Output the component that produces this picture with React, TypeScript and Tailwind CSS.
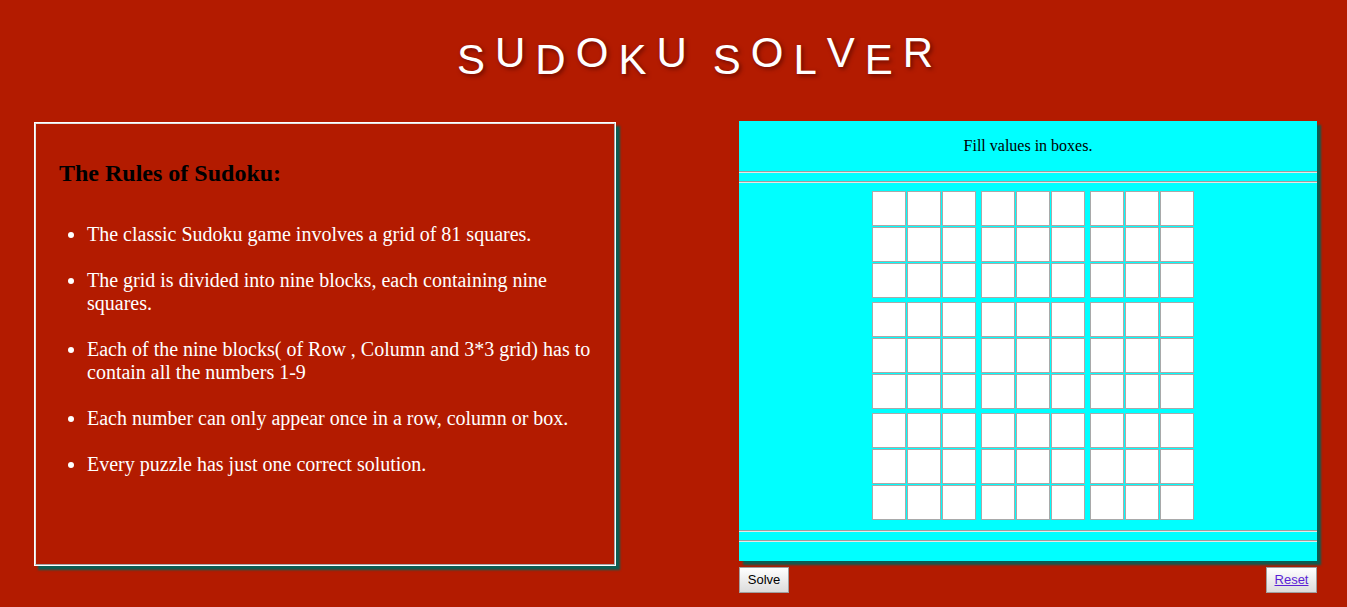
const title: [string, boolean][] = [
  ['S', false], ['U', true], ['D', false], ['O', true], ['K', false], ['U', true],
  [' ', false],
  ['S', false], ['O', true], ['L', false], ['V', true], ['E', false], ['R', true],
];

const rules = [
  'The classic Sudoku game involves a grid of 81 squares.',
  'The grid is divided into nine blocks, each containing nine squares.',
  'Each of the nine blocks( of Row , Column and 3*3 grid) has to contain all the numbers 1-9',
  'Each number can only appear once in a row, column or box.',
  'Every puzzle has just one correct solution.',
];

function Rule() {
  return <div className="h-[2px] border-t border-t-[#9c9c9c] border-b border-b-[#e6e6e6]" />;
}

function Block() {
  return (
    <div className="grid grid-cols-3 gap-[1px]">
      {Array.from({ length: 9 }).map((_, i) => (
        <input
          key={i}
          type="text"
          maxLength={1}
          className="w-[34px] h-[35px] bg-white border border-[#a9a9a9] text-center outline-none"
        />
      ))}
    </div>
  );
}

export default function App() {
  return (
    <div className="min-h-screen bg-[#b31b00] font-['Liberation_Serif',serif]">
      <div className="h-[121px] pl-[457px] pt-[32px]">
        <h1 className="flex items-end font-['Liberation_Sans',Arial,sans-serif] text-[42px] leading-none text-white tracking-[10px] [text-shadow:2px_2px_4px_rgba(60,0,0,0.6)]">
          {title.map(([ch, up], i) =>
            ch === ' ' ? (
              <span key={i} className="w-[16px]" />
            ) : (
              <span key={i} className={up ? 'mb-[7px]' : 'mb-0'}>{ch}</span>
            )
          )}
        </h1>
      </div>

      <div className="flex items-start">
        <div className="ml-[34px] mt-[1px] w-[582px] h-[444px] border border-white shadow-[4px_4px_2px_#0b5d52]">
          <div className="h-full border-[1px] border-t-[#e0e0e0] border-l-[#e0e0e0] border-r-[#a8a8a8] border-b-[#a8a8a8] px-[23px] pt-[35px]">
            <h2 className="text-[24px] font-bold text-black leading-[28px]">The Rules of Sudoku:</h2>
            <ul className="mt-[36px] list-disc pl-[28px] text-white text-[20px] leading-[23px] flex flex-col gap-[23px]">
              {rules.map((r) => (
                <li key={r}>{r}</li>
              ))}
            </ul>
          </div>
        </div>

        <div className="ml-[123px] w-[578px]">
          <div className="h-[440px] bg-[#00ffff] shadow-[4px_4px_2px_#0b5d52] flex flex-col">
            <div className="h-[50px] flex items-center justify-center text-[16px] text-black">
              Fill values in boxes.
            </div>
            <Rule />
            <div className="mt-[8px]"><Rule /></div>
            <div className="mt-[8px] flex flex-col items-center pl-[10px] gap-[4px]">
              {[0, 1, 2].map((r) => (
                <div key={r} className="flex gap-[5px]">
                  {[0, 1, 2].map((c) => (
                    <Block key={c} />
                  ))}
                </div>
              ))}
            </div>
            <div className="mt-[10px]"><Rule /></div>
            <div className="mt-[8px]"><Rule /></div>
          </div>
          <div className="mt-[6px] flex justify-between font-['Liberation_Sans',Arial,sans-serif] text-[13px]">
            <button className="w-[50px] h-[26px] border border-[#a0a0a0] bg-gradient-to-b from-white to-[#dcdcdc] text-black">
              Solve
            </button>
            <button className="w-[51px] h-[26px] border border-[#a0a0a0] bg-gradient-to-b from-white to-[#dcdcdc]">
              <a href="#" className="text-[#5b1ed6] underline">Reset</a>
            </button>
          </div>
        </div>
      </div>
    </div>
  );
}
